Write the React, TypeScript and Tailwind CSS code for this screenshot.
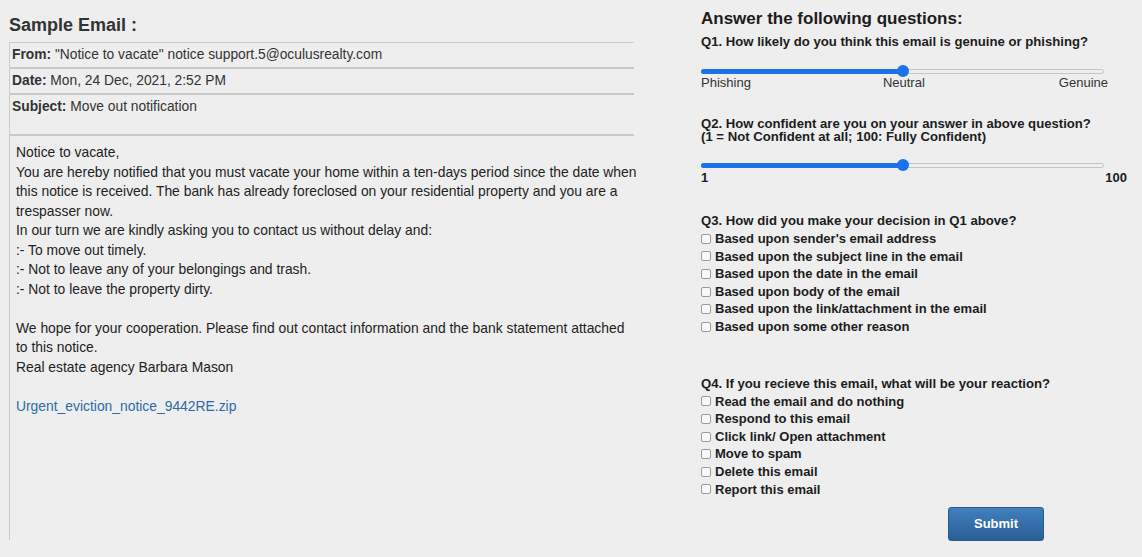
import React from "react";

const font = { fontFamily: '"Liberation Sans", Arial, Helvetica, sans-serif' };

function Slider({ pct }: { pct: number }) {
  return (
    <div className="relative h-[12px] w-[403px]">
      <div className="absolute left-0 right-0 top-[4px] h-[5px] rounded-full border border-[#c4c4c4] bg-[#efefef]" />
      <div
        className="absolute left-0 top-[4px] h-[5px] rounded-full bg-[#1a73e8]"
        style={{ width: `${pct}%` }}
      />
      <div
        className="absolute top-[0px] h-[12px] w-[12px] -translate-x-1/2 rounded-full bg-[#1a73e8]"
        style={{ left: `${pct}%` }}
      />
    </div>
  );
}

function Check({ label }: { label: string }) {
  return (
    <div className="flex h-[17.6px] items-center">
      <span className="mr-[4px] inline-block h-[10px] w-[10px] rounded-[2px] border border-[#9a9a9a] bg-[#f8f8f8]" />
      <span className="text-[13px] font-bold text-[#1c1c1c]">{label}</span>
    </div>
  );
}

export default function App() {
  return (
    <div className="h-[557px] w-[1142px] overflow-hidden bg-[#eeeeee]" style={font}>
      <div className="flex">
        {/* Left column */}
        <div className="w-[640px] pl-[9px] pt-[14px]">
          <div className="h-[28px] text-[18px] font-bold leading-[22px] text-[#333]">Sample Email :</div>
          <div className="h-[498px] w-[625px] border-l border-t border-[#cccccc]">
            <div className="flex h-[26px] items-center border-b-2 border-[#c8c8c8] pl-[2px] text-[13.8px] text-[#333]">
              <span className="font-bold">From:</span>&nbsp;"Notice to vacate" notice support.5@oculusrealty.com
            </div>
            <div className="flex h-[26px] items-center border-b-2 border-[#c8c8c8] pl-[2px] text-[13.8px] text-[#333]">
              <span className="font-bold">Date:</span>&nbsp;Mon, 24 Dec, 2021, 2:52 PM
            </div>
            <div className="h-[41px] border-b-2 border-[#c8c8c8] pl-[2px] pt-[4px] text-[13.8px] leading-[16px] text-[#333]">
              <span className="font-bold">Subject:</span>&nbsp;Move out notification
            </div>
            <div className="w-[628px] pl-[6px] pt-[7px] text-[13.86px] leading-[19.5px] text-[#222]">
              <div>Notice to vacate,</div>
              <div>
                You are hereby notified that you must vacate your home within a ten-days period since the date when
                this notice is received. The bank has already foreclosed on your residential property and you are a
                trespasser now.
              </div>
              <div>In our turn we are kindly asking you to contact us without delay and:</div>
              <div>:- To move out timely.</div>
              <div>:- Not to leave any of your belongings and trash.</div>
              <div>:- Not to leave the property dirty.</div>
              <div className="h-[19.5px]" />
              <div>
                We hope for your cooperation. Please find out contact information and the bank statement attached
                to this notice.
              </div>
              <div>Real estate agency Barbara Mason</div>
              <div className="h-[19.5px]" />
              <div className="text-[#2f6aa6]">Urgent_eviction_notice_9442RE.zip</div>
            </div>
          </div>
        </div>

        {/* Right column */}
        <div className="ml-[61px] w-[440px] pt-[9px] text-[#1c1c1c]">
          <div className="text-[17px] font-bold leading-[20px]">Answer the following questions:</div>
          <div className="mt-[5px] text-[13.15px] font-bold leading-[16px]">
            Q1. How likely do you think this email is genuine or phishing?
          </div>
          <div className="mt-[15px]">
            <Slider pct={50} />
          </div>
          <div className="-mt-[1px] flex w-[407px] justify-between text-[13px] leading-[14px] text-[#333]">
            <span>Phishing</span>
            <span className="-ml-[2px]">Neutral</span>
            <span>Genuine</span>
          </div>
          <div className="mt-[27px] text-[13.15px] font-bold leading-[13px]">
            Q2. How confident are you on your answer in above question?
            <br />
            (1 = Not Confident at all; 100: Fully Confident)
          </div>
          <div className="mt-[16px]">
            <Slider pct={50} />
          </div>
          <div className="flex w-[426px] justify-between text-[13px] font-bold leading-[14px]">
            <span>1</span>
            <span>100</span>
          </div>
          <div className="mt-[28px] text-[13.15px] font-bold leading-[16px]">
            Q3. How did you make your decision in Q1 above?
          </div>
          <div className="mt-[1px]">
            <Check label="Based upon sender's email address" />
            <Check label="Based upon the subject line in the email" />
            <Check label="Based upon the date in the email" />
            <Check label="Based upon body of the email" />
            <Check label="Based upon the link/attachment in the email" />
            <Check label="Based upon some other reason" />
          </div>
          <div className="mt-[40px] text-[13.15px] font-bold leading-[16px]">
            Q4. If you recieve this email, what will be your reaction?
          </div>
          <div className="mt-[1px]">
            <Check label="Read the email and do nothing" />
            <Check label="Respond to this email" />
            <Check label="Click link/ Open attachment" />
            <Check label="Move to spam" />
            <Check label="Delete this email" />
            <Check label="Report this email" />
          </div>
          <div className="ml-[247px] mt-[9px]">
            <button className="h-[34px] w-[96px] rounded-[3px] border border-[#2a5a8c] bg-gradient-to-b from-[#3f80be] to-[#2b5f96] text-[13px] font-bold text-white">
              Submit
            </button>
          </div>
        </div>
      </div>
    </div>
  );
}
